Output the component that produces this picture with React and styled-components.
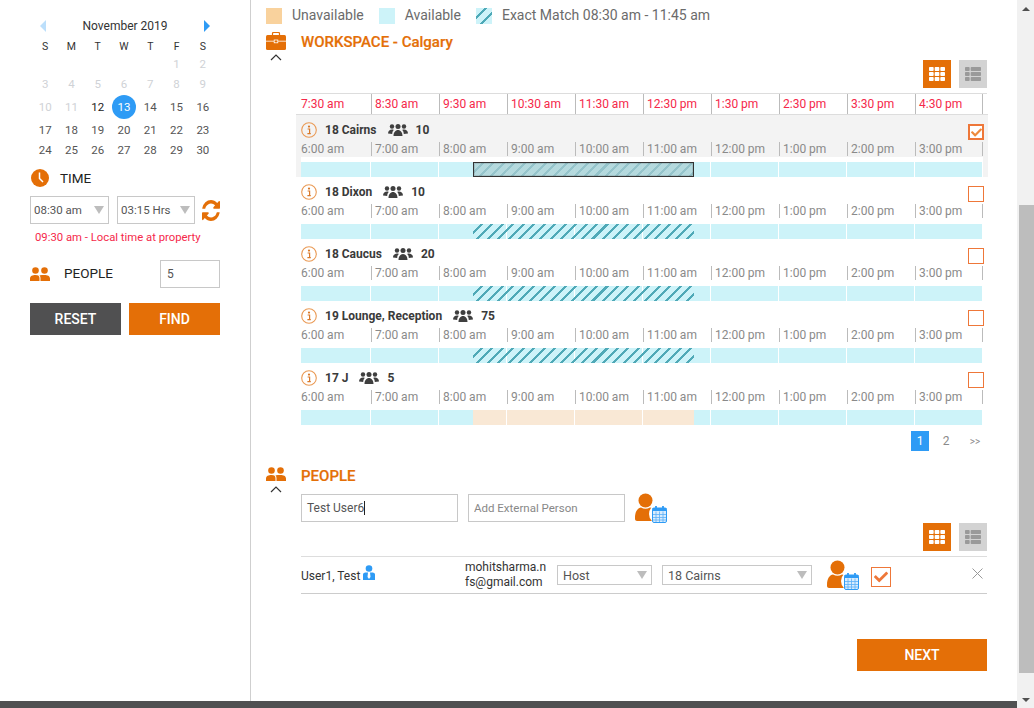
import React from 'react';
import styled, { createGlobalStyle } from 'styled-components';
import { FaCheck, FaTh, FaThList } from 'react-icons/fa';

const ORANGE = '#e46f07';
const CYAN = '#cdf3f9';
const BLUE = '#2e9bf5';

const Global = createGlobalStyle`
  html, body { margin: 0; padding: 0; background: #fff; overflow: hidden; }
  * { box-sizing: border-box; }
  body { font-family: Roboto, "Liberation Sans", sans-serif; color: #333; }
`;

const Page = styled.div`display: flex; width: 1034px; height: 708px; overflow: hidden;`;
const Window = styled.div`display: flex; flex-direction: column; width: 1017px;`;
const Body = styled.div`display: flex; height: 701px; overflow: hidden;`;
const FooterBar = styled.div`height: 7px; background: #505051;`;

const Scrollbar = styled.div`display: flex; flex-direction: column; align-items: center; width: 17px; background: #f1f1f1;`;
const ArrowBox = styled.div`
  display: flex; align-items: center; justify-content: center; height: 17px; width: 17px;
  &::before { content: ''; border-left: 4px solid transparent; border-right: 4px solid transparent;
    ${p => p.$down ? 'border-top: 4px solid #505050;' : 'border-bottom: 4px solid #505050;'} }
`;
const Thumb = styled.div`width: 15px; height: 468px; margin: 188px 0 0 1px; background: #bdbdbd;`;
const Spacer = styled.div`flex: 1;`;

const Sidebar = styled.aside`width: 251px; flex: none; border-right: 1px solid #cfcfcf; padding: 19px 30px 0;`;
const CalHead = styled.div`display: flex; align-items: center; justify-content: space-between; height: 14px; padding: 0 10px;`;
const CalTitle = styled.div`font-size: 12px; color: #333;`;
const Nav = styled.div`
  width: 0; height: 0; border-top: 6px solid transparent; border-bottom: 6px solid transparent;
  ${p => p.$next ? `border-left: 6px solid ${BLUE};` : `border-right: 6px solid #bcdffb;`}
`;
const CalGrid = styled.div`
  display: grid; width: 184px; margin: 6px 0 0 2px;
  grid-template-columns: repeat(7, 1fr); grid-template-rows: 15px 20px 20px 26px 20px 20px;
  justify-items: center; align-items: center;
`;
const DayName = styled.div`font-size: 10.5px; color: #333;`;
const Day = styled.div`
  display: flex; align-items: center; justify-content: center; width: 24px; height: 24px; border-radius: 50%;
  font-size: 11.5px;
  color: ${p => p.$sel ? '#fff' : p.$off ? '#cfd2d6' : p.$today ? '#222' : '#555'};
  background: ${p => p.$sel ? BLUE : 'transparent'};
`;

const TimeHead = styled.div`display: flex; align-items: center; gap: 11px; margin: 9px 0 0 1px; height: 18px; font-size: 13.5px; color: #222;`;
const TimeRow = styled.div`display: flex; align-items: center; margin-top: 9px;`;
const Select = styled.div`
  position: relative; display: flex; align-items: center; flex: none;
  width: ${p => p.$w}px; height: ${p => p.$h || 28}px; margin-left: ${p => p.$ml || 0}px;
  border: 1px solid #c8c8c8; background: #fff; padding-left: ${p => p.$h ? 5 : 3}px;
  font-size: ${p => p.$h ? 12.5 : 11.5}px; color: #555;
  &::after { content: ''; position: absolute; right: 4px; top: 50%; margin-top: -4px;
    border-left: 5px solid transparent; border-right: 5px solid transparent; border-top: 8px solid #bdbdbd; }
`;
const RefreshIcon = styled.svg`width: 18px; height: 21px; margin-left: 7px; fill: ${ORANGE};`;
const LocalNote = styled.div`margin: 7px 0 0 5px; font-size: 11.3px; line-height: 13px; color: #f5284a;`;
const PeopleRow = styled.div`display: flex; align-items: center; margin-top: 16px; height: 28px; font-size: 13.5px; color: #222;`;
const PeopleLabel = styled.span`margin-left: 14px; margin-top: -2px;`;
const SmallInput = styled.input`
  width: 60px; height: 28px; margin-left: auto; border: 1px solid #c8c8c8; padding: 0 6px;
  font: 12px Roboto, sans-serif; color: #555; outline: none;
`;
const ButtonRow = styled.div`display: flex; gap: 8px; margin-top: 15px;`;
const Btn = styled.button`
  width: ${p => p.$w || 91}px; height: 32px; border: 0; padding: 0; font: 500 14px Roboto, sans-serif; color: #fff;
  background: ${p => p.$dark ? '#505051' : ORANGE};
`;

const Main = styled.main`flex: 1; padding: 8px 30px 0 15px; overflow: hidden;`;
const Legend = styled.div`display: flex; align-items: center; height: 16px; font-size: 14px; color: #6b6b6b; margin-top: -1px;`;
const Swatch = styled.div`
  width: 16px; height: 16px; margin: 1px ${p => p.$mr}px 0 ${p => p.$ml}px;
  background: ${p => p.$kind === 'un' ? '#f9d29d' : p.$kind === 'av' ? CYAN
    : `repeating-linear-gradient(135deg, ${CYAN} 0 6px, #4da9b7 6px 8px)`};
`;
const Section = styled.section`display: flex; margin-top: ${p => p.$mt}px;`;
const IconCol = styled.div`display: flex; flex-direction: column; align-items: center; width: 20px; margin-right: 15px;`;
const Content = styled.div`width: 686px;`;
const Title = styled.h2`margin: 0; height: 20px; line-height: 20px; font-size: 15px; font-weight: 500; color: ${ORANGE};
  -webkit-text-stroke: 0.2px ${ORANGE};`;
const ToggleRow = styled.div`display: flex; justify-content: flex-end; gap: 8px; margin-top: ${p => p.$mt}px;`;
const Toggle = styled.div`
  display: flex; align-items: center; justify-content: center; width: 28px; height: 28px;
  background: ${p => p.$on ? ORANGE : '#d3d3d3'}; color: ${p => p.$on ? '#fff' : '#9a9a9a'};
  svg { width: 16px; height: 16px; }
`;
const Ruler = styled.div`
  display: flex; height: ${p => p.$head ? 20 : 14}px; width: 682px; align-items: center;
  margin-top: ${p => p.$head ? 0 : 3}px; font-size: 12px; color: ${p => p.$head ? '#f5284a' : '#8a8a8a'};
`;
const HeadWrap = styled.div`margin-top: 5px; border-top: 1px solid #ddd;`;
const Tick = styled.div`
  flex: none; width: ${p => p.$first ? 70 : 68}px; padding-left: ${p => p.$first ? 0 : 3}px; height: 100%;
  display: flex; align-items: center; white-space: nowrap;
  border-left: ${p => p.$first ? '0' : '1px solid #bbb'};
  ${p => p.$last ? 'border-right: 1px solid #bbb;' : ''}
`;
const Rooms = styled.div`margin: 0 -1px 0 -5px; border-top: 1px solid #ddd;`;
const Room = styled.div`
  position: relative; height: 62px; padding: 6px 0 0 5px;
  background: ${p => p.$sel ? '#f3f3f3' : 'transparent'};
`;
const RoomHead = styled.div`display: flex; align-items: center; height: 18px; font-size: 12px; font-weight: 700; color: #3a3a3a;`;
const RoomName = styled.span`margin: 0 11px 0 8px;`;
const RoomCount = styled.span`margin-left: 8px;`;
const RoomCheck = styled.div`
  position: absolute; top: 9px; right: 4px; width: 16px; height: 16px; background: #fff;
  border: 1px solid #ee7739; display: flex; align-items: center; justify-content: center;
  ${p => p.$on ? 'border-width: 2px;' : ''}
  svg { width: 11px; height: 11px; color: #ee8a3c; }
`;
const Track = styled.div`width: 682px; margin-top: 1px; padding-top: 5px; background: #fff;`;
const Bar = styled.div`position: relative; display: flex; width: 681px; height: 15px; background: ${CYAN};`;
const BarCell = styled.div`
  position: relative; z-index: 2; flex: none; width: ${p => p.$w}px; height: 100%;
  border-right: ${p => p.$last ? 0 : '1px solid #fff'};
`;
const Slot = styled.div`
  position: absolute; top: 0; bottom: 0; left: 172px; width: 221px;
  ${p => p.$kind === 'tan' && `background: #f9e8d5;`}
  ${p => p.$kind === 'hatch' && `z-index: 3; background: repeating-linear-gradient(135deg, transparent 0 5.2px, #4fa9b7 5.2px 7.4px);`}
  ${p => p.$kind === 'sel' && `z-index: 3; border: 1px solid #333; box-shadow: inset 0 0 0 1px rgba(60,60,60,.15);
    background: repeating-linear-gradient(135deg, #b2d7dbe6 0 5.2px, #8fbfc6e6 5.2px 7.4px);`}
`;
const Pager = styled.div`display: flex; justify-content: flex-end; align-items: center; margin-top: 6px; padding-right: 2px; height: 20px; font-size: 11px; color: #8a8a8a;`;
const PageBtn = styled.div`
  width: ${p => p.$w || 18}px; height: 20px; margin-left: ${p => p.$ml || 0}px; display: flex; align-items: center; justify-content: center;
  background: ${p => p.$on ? BLUE : 'transparent'}; color: ${p => p.$on ? '#fff' : '#8a8a8a'}; font-size: ${p => p.$s || 12}px;
`;
const InputRow = styled.div`display: flex; align-items: center; margin-top: 8px; height: 28px;`;
const Field = styled.div`
  display: flex; align-items: center; width: 157px; height: 28px; border: 1px solid #c8c8c8; padding: 0 5px;
  font-size: 12px; color: #555; margin-right: 10px;
`;
const Caret = styled.span`display: inline-block; width: 1px; height: 14px; background: #222;`;
const FieldInput = styled.input`
  width: 157px; height: 28px; border: 1px solid #c8c8c8; padding: 0 5px; margin-right: 10px; outline: none;
  font: 11.5px Roboto, sans-serif; &::placeholder { color: #888; opacity: 1; }
`;
const PersonRow = styled.div`
  display: flex; align-items: center; height: 38px; margin-top: 5px;
  border-top: 1px solid #ddd; border-bottom: 1px solid #ccc;
`;
const PersonName = styled.div`display: flex; align-items: center; width: 164px; padding-top: 1px; font-size: 12px; color: #333; gap: 3px;`;
const Email = styled.div`width: 92px; font-size: 12px; line-height: 15px; color: #333; white-space: nowrap;`;
const HostIcon = styled.svg`flex: none; width: 32px; height: 30px; margin-left: ${p => p.$ml || 0}px;`;
const BigCheck = styled.div`
  display: flex; align-items: center; justify-content: center; width: 20px; height: 20px; margin-left: 12px; margin-top: 3px;
  border: 1px solid #ee7739; svg { width: 14px; height: 14px; color: #ee7739; }
`;
const CloseIcon = styled.svg`width: 11px; height: 11px; margin: -3px 4px 0 auto;`;
const NextRow = styled.div`display: flex; justify-content: flex-end; margin-top: 45px;`;

const Chevron = styled.svg`width: 12px; height: 7px; margin-top: ${p => p.$mt}px;`;
const Up = ({ mt }) => (
  <Chevron $mt={mt} viewBox="0 0 12 7"><path d="M1 6l5-5 5 5" fill="none" stroke="#333" strokeWidth="1.2" /></Chevron>
);
const Briefcase = () => (
  <svg width="20" height="18" viewBox="0 0 20 18">
    <path d="M6.5 3V1.5A1 1 0 0 1 7.500 .5h5a1 1 0 0 1 1 1V3" fill="none" stroke={ORANGE} strokeWidth="1.2" />
    <rect x="0" y="3" width="20" height="15" rx="1.5" fill={ORANGE} />
    <path d="M0 9.200h8M12 9.200h8" stroke="#fff" strokeWidth=".8" />
    <rect x="8.200" y="8" width="3.600" height="2.800" fill="none" stroke="#fff" strokeWidth=".8" />
  </svg>
);
const Clock = () => (
  <svg width="18" height="18" viewBox="0 0 18 18">
    <circle cx="9" cy="9" r="9" fill={ORANGE} />
    <path d="M8.500 3.500V9.500L12 13" fill="none" stroke="#fff" strokeWidth="1.500" />
  </svg>
);
const TwoPeople = ({ mt = 0 }) => (
  <svg width="20" height="14" viewBox="0 0 20 14" style={{ flex: 'none', marginTop: mt }}>
    <circle cx="5.500" cy="3.500" r="3.300" fill={ORANGE} />
    <circle cx="14.500" cy="3.500" r="3.300" fill={ORANGE} />
    <path d="M0 14v-2.500C0 9 2.500 8 5.500 8s4 1 4 3.500V14zM10.500 14v-2.500c0-1.500-.3-2.400-1-3.200 1.500-.3 2.800-.3 5-.3 3 0 5.500 1 5.500 3.500V14z" fill={ORANGE} />
  </svg>
);
const ThreePeople = () => (
  <svg width="20" height="12" viewBox="0 0 20 12">
    <circle cx="4" cy="2.500" r="2.200" fill="#3f3f3f" />
    <circle cx="16" cy="2.500" r="2.200" fill="#3f3f3f" />
    <circle cx="10" cy="2.500" r="2.500" fill="#3f3f3f" />
    <path d="M0 9.500C0 7 2 5.500 4 5.500c.8 0 1.300.2 1.800.4C4.700 7 4.200 8.300 4.200 10zM20 9.500C20 7 18 5.500 16 5.500c-.8 0-1.300.2-1.800.4 1.100 1.100 1.600 2.400 1.600 4.100zM5.500 12c0-3.500 2-6 4.500-6s4.500 2.500 4.500 6z" fill="#3f3f3f" />
  </svg>
);
const Info = () => (
  <svg width="16" height="16" viewBox="0 0 16 16" style={{ flex: 'none' }}>
    <circle cx="8" cy="8" r="7.300" fill="none" stroke="#ea9a55" strokeWidth="1.100" />
    <circle cx="8" cy="4.600" r="1.100" fill="#d9792a" />
    <path d="M6.600 7h2v4.600h1M6.400 11.600h3.400" fill="none" stroke="#d9792a" strokeWidth="1.200" />
  </svg>
);
const Host = ({ ml }) => (
  <HostIcon $ml={ml} viewBox="0 0 32 30">
    <circle cx="10.500" cy="7.500" r="7" fill={ORANGE} />
    <path d="M0 25c0-7 3-10 6-10.500 3 1.600 6 1.600 9 0 3 .5 6 3.500 6 10.500v1c0 1-1 2-2 2H2c-1 0-2-1-2-2z" fill={ORANGE} />
    <circle cx="24" cy="21" r="10" fill="#fff" />
    <rect x="17.500" y="15" width="14" height="14.500" rx="1.500" fill="#d8ecfd" stroke={BLUE} strokeWidth="1" />
    <rect x="17.500" y="15" width="14" height="3" fill={BLUE} />
    <path d="M21 13v4M28 13v4" stroke={BLUE} strokeWidth="1.800" />
    <path d="M21 18.500v10.500M24.500 18.500v10.500M28 18.500v10.500M18 21.500h13M18 24.500h13M18 27h13" stroke="#5cb0f7" strokeWidth=".8" />
  </HostIcon>
);
const Executive = () => (
  <svg width="12" height="15" viewBox="0 0 12 15" style={{ flex: 'none', marginTop: -6 }}>
    <circle cx="6" cy="3.500" r="3.300" fill={BLUE} />
    <path d="M0 15V9.500C0 8 1.500 7.500 3.500 7.500L5 7.500 4.500 12 6 14 7.500 12 7 7.500h1.500c2 0 3.500.5 3.500 2V15z" fill={BLUE} />
  </svg>
);
const Refresh = () => (
  <RefreshIcon viewBox="128 128 1536 1536" preserveAspectRatio="none">
    <path d="M1639 1056q0 5-1 7-64 268-268 434.500t-478 166.500q-146 0-282.500-55t-243.500-157l-129 129q-19 19-45 19t-45-19-19-45v-448q0-26 19-45t45-19h448q26 0 45 19t19 45-19 45l-137 137q71 66 161 102t187 36q134 0 250-65t186-179q11-17 53-117 8-23 30-23h192q13 0 22.500 9.500t9.500 22.500zm25-800v448q0 26-19 45t-45 19h-448q-26 0-45-19t-19-45 19-45l138-138q-148-137-349-137-134 0-250 65t-186 179q-11 17-53 117-8 23-30 23h-199q-13 0-22.500-9.500t-9.500-22.500v-7q65-268 270-434.500t480-166.500q146 0 284 55.500t245 156.500l130-129q19-19 45-19t45 19 19 45z" />
  </RefreshIcon>
);

const WEEK = ['S', 'M', 'T', 'W', 'T', 'F', 'S'];
const DAYS = Array.from({ length: 30 }, (_, i) => i + 1);
const HEAD_TIMES = ['7:30 am', '8:30 am', '9:30 am', '10:30 am', '11:30 am', '12:30 pm', '1:30 pm', '2:30 pm', '3:30 pm', '4:30 pm'];
const ROW_TIMES = ['6:00 am', '7:00 am', '8:00 am', '9:00 am', '10:00 am', '11:00 am', '12:00 pm', '1:00 pm', '2:00 pm', '3:00 pm'];
const ROOMS = [
  { name: '18 Cairns', count: 10, kind: 'sel', sel: true },
  { name: '18 Dixon', count: 10, kind: 'hatch' },
  { name: '18 Caucus', count: 20, kind: 'hatch' },
  { name: '19 Lounge, Reception', count: 75, kind: 'hatch' },
  { name: '17 J', count: 5, kind: 'tan' },
];

const TimeRuler = ({ times, head }) => (
  <Ruler $head={head}>
    {times.map((t, i) => <Tick key={i} $first={i === 0} $last={i === times.length - 1}>{t}</Tick>)}
  </Ruler>
);

const Toggles = ({ mt }) => (
  <ToggleRow $mt={mt}>
    <Toggle $on><FaTh /></Toggle>
    <Toggle><FaThList /></Toggle>
  </ToggleRow>
);

export default function App() {
  return (
    <Page>
      <Global />
      <Window>
        <Body>
          <Sidebar>
            <CalHead><Nav /><CalTitle>November 2019</CalTitle><Nav $next /></CalHead>
            <CalGrid>
              {WEEK.map((d, i) => <DayName key={i}>{d}</DayName>)}
              {[0, 0, 0, 0, 0].map((_, i) => <div key={i} />)}
              {DAYS.map(d => <Day key={d} $off={d < 12} $today={d === 12} $sel={d === 13}>{d}</Day>)}
            </CalGrid>
            <TimeHead><Clock />TIME</TimeHead>
            <TimeRow>
              <Select $w={79}>08:30 am</Select>
              <Select $w={78} $ml={8}>03:15 Hrs</Select>
              <Refresh />
            </TimeRow>
            <LocalNote>09:30 am - Local time at property</LocalNote>
            <PeopleRow>
              <TwoPeople />
              <PeopleLabel>PEOPLE</PeopleLabel>
              <SmallInput defaultValue="5" readOnly />
            </PeopleRow>
            <ButtonRow><Btn $dark>RESET</Btn><Btn>FIND</Btn></ButtonRow>
          </Sidebar>
          <Main>
            <Legend>
              <Swatch $kind="un" $ml={0} $mr={10} />Unavailable
              <Swatch $kind="av" $ml={15} $mr={10} />Available
              <Swatch $kind="ex" $ml={15} $mr={10} />Exact Match 08:30 am - 11:45 am
            </Legend>
            <Section $mt={9}>
              <IconCol><Briefcase /><Up mt={4} /></IconCol>
              <Content>
                <Title>WORKSPACE - Calgary</Title>
                <Toggles mt={8} />
                <HeadWrap><TimeRuler times={HEAD_TIMES} head /></HeadWrap>
                <Rooms>
                  {ROOMS.map(r => (
                    <Room key={r.name} $sel={r.sel}>
                      <RoomHead>
                        <Info />
                        <RoomName>{r.name}</RoomName>
                        <ThreePeople />
                        <RoomCount>{r.count}</RoomCount>
                      </RoomHead>
                      <RoomCheck $on={r.sel}>{r.sel && <FaCheck />}</RoomCheck>
                      <TimeRuler times={ROW_TIMES} />
                      <Track>
                        <Bar>
                          <Slot $kind={r.kind} />
                          {ROW_TIMES.map((t, i) => <BarCell key={t} $w={i === 0 ? 70 : 68} $last={i === 9} />)}
                        </Bar>
                      </Track>
                    </Room>
                  ))}
                </Rooms>
                <Pager>
                  <PageBtn $on>1</PageBtn>
                  <PageBtn $ml={8}>2</PageBtn>
                  <PageBtn $ml={10} $w={20} $s={10}>&gt;&gt;</PageBtn>
                </Pager>
              </Content>
            </Section>
            <Section $mt={15}>
              <IconCol><TwoPeople mt={1} /><Up mt={5} /></IconCol>
              <Content>
                <Title>PEOPLE</Title>
                <InputRow>
                  <Field>Test User6<Caret /></Field>
                  <FieldInput placeholder="Add External Person" readOnly />
                  <Host />
                </InputRow>
                <Toggles mt={1} />
                <PersonRow>
                  <PersonName>User1, Test <Executive /></PersonName>
                  <Email>mohitsharma.n<br />fs@gmail.com</Email>
                  <Select $w={95} $h={20}>Host</Select>
                  <Select $w={150} $h={20} $ml={10}>18 Cairns</Select>
                  <Host ml={15} />
                  <BigCheck><FaCheck /></BigCheck>
                  <CloseIcon viewBox="0 0 11 11"><path d="M.5.5l10 10M10.500.5l-10 10" stroke="#999" strokeWidth="1" /></CloseIcon>
                </PersonRow>
                <NextRow><Btn $w={130}>NEXT</Btn></NextRow>
              </Content>
            </Section>
          </Main>
        </Body>
        <FooterBar />
      </Window>
      <Scrollbar>
        <ArrowBox />
        <Thumb />
        <Spacer />
        <ArrowBox $down />
      </Scrollbar>
    </Page>
  );
}
